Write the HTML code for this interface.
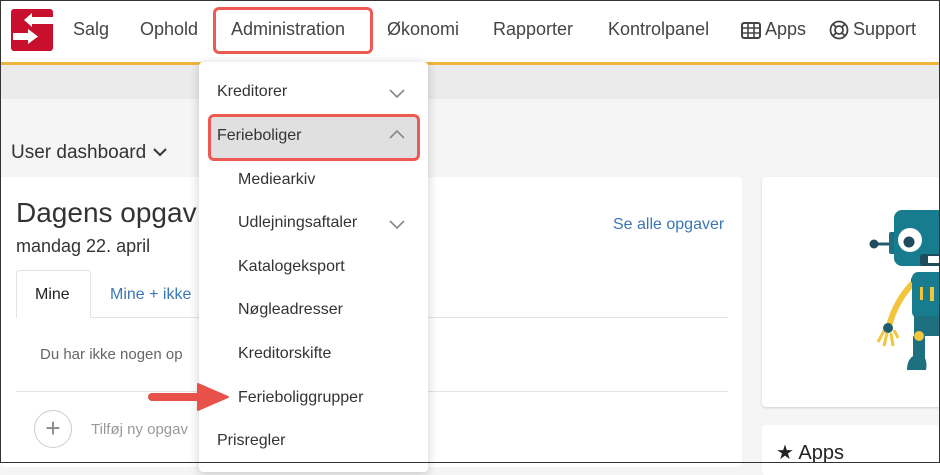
<!DOCTYPE html>
<html><head><meta charset="utf-8"><style>
*{margin:0;padding:0;box-sizing:border-box}
body{width:940px;height:463px;overflow:hidden;position:relative;background:#f5f5f5;font-family:"Liberation Sans",Arial,sans-serif;color:#333}
.a{position:absolute;white-space:nowrap}
.nav{font-size:18px;color:#444;top:19px}
.dd{font-size:16px;color:#333}
</style></head><body>
<div class="a" style="left:0;top:0;width:940px;height:62px;background:#fff"></div>
<div class="a" style="left:0;top:62px;width:940px;height:3px;background:#f0b43c"></div>
<div class="a" style="left:0;top:65px;width:940px;height:34px;background:#ebebeb"></div>
<!-- logo -->
<svg class="a" style="left:11px;top:9px" width="42" height="42" viewBox="0 0 42 42"><rect width="42" height="42" rx="3" fill="#c8102e"/><path d="M13 11 L21 4 V8 H42 V15 H21 V18 Z" fill="#fff"/><path d="M2 24 H17 V20 L27 27.5 L17 35 V31 H2 Z" fill="#fff"/></svg>
<div class="a nav" style="left:73px">Salg</div>
<div class="a nav" style="left:140px">Ophold</div>
<div class="a" style="left:213px;top:7px;width:160px;height:47px;border:3px solid #ee5a52;border-radius:6px"></div>
<div class="a nav" style="left:231px">Administration</div>
<div class="a nav" style="left:387px">Økonomi</div>
<div class="a nav" style="left:493px">Rapporter</div>
<div class="a nav" style="left:608px">Kontrolpanel</div>
<svg class="a" style="left:741px;top:22px" width="20" height="17" viewBox="0 0 20 17"><rect x="1" y="1" width="18" height="15" rx="2" fill="none" stroke="#444" stroke-width="2"/><path d="M1 6H19M1 11H19M7 1V16M13 1V16" stroke="#444" stroke-width="1.6"/></svg>
<div class="a nav" style="left:765px">Apps</div>
<svg class="a" style="left:829px;top:20px" width="20" height="20" viewBox="0 0 20 20" fill="none" stroke="#444" stroke-width="1.8"><circle cx="10" cy="10" r="8.5"/><circle cx="10" cy="10" r="4"/><path d="M4 4L7 7M16 4L13 7M4 16L7 13M16 16L13 13"/></svg>
<div class="a nav" style="left:853px">Support</div>
<div class="a" style="left:11px;top:142px;font-size:19px;color:#333">User dashboard</div>
<svg class="a" style="left:152px;top:146px" width="16" height="12"><path d="M2 3L8 9L14 3" fill="none" stroke="#333" stroke-width="2"/></svg>
<!-- left card -->
<div class="a" style="left:0;top:177px;width:742px;height:290px;background:#fff;border-radius:4px"></div>
<div class="a" style="left:16px;top:197px;font-size:28px;color:#333">Dagens opgav</div>
<div class="a" style="left:16px;top:236px;font-size:18px;color:#333">mandag 22. april</div>
<div class="a" style="left:613px;top:216px;font-size:16px;color:#3a78b5">Se alle opgaver</div>
<div class="a" style="left:16px;top:317px;width:712px;height:1px;background:#e3e3e3"></div>
<div class="a" style="left:16px;top:270px;width:75px;height:48px;border:1px solid #e3e3e3;border-bottom:none;background:#fff;border-radius:3px 3px 0 0"></div>
<div class="a" style="left:35px;top:286px;font-size:16px;color:#222">Mine</div>
<div class="a" style="left:110px;top:286px;font-size:16px;color:#3a78b5">Mine + ikke</div>
<div class="a" style="left:40px;top:346px;font-size:15px;color:#666">Du har ikke nogen op</div>
<div class="a" style="left:16px;top:391px;width:712px;height:1px;background:#e3e3e3"></div>
<div class="a" style="left:34px;top:410px;width:38px;height:38px;border:1px solid #ccc;border-radius:50%;text-align:center;line-height:34px;font-size:26px;color:#888;font-weight:300">+</div>
<div class="a" style="left:91px;top:421px;font-size:15px;color:#999">Tilføj ny opgav</div>
<!-- right cards -->
<div class="a" style="left:762px;top:177px;width:190px;height:230px;background:#fff;border-radius:4px;box-shadow:0 1px 2px rgba(0,0,0,.15)"></div>
<svg class="a" style="left:860px;top:200px" width="80" height="180" viewBox="860 200 80 180">
<path d="M874 244 H893" stroke="#1f5e6e" stroke-width="3"/><circle cx="874" cy="244" r="4.5" fill="#1f4b5c"/>
<rect x="889" y="232" width="8" height="22" rx="2" fill="#1e6f80"/>
<rect x="894" y="210" width="60" height="56" rx="8" fill="#177d8e"/>
<circle cx="910" cy="240" r="12" fill="#fff"/><circle cx="909" cy="242" r="5.5" fill="#1f4b5c"/>
<rect x="920" y="254" width="22" height="12" rx="3" fill="#1f4b5c"/><rect x="928" y="256" width="12" height="7" fill="#fff"/>
<path d="M914 282 Q896 300 889 326" stroke="#f2c53d" stroke-width="6" fill="none"/>
<circle cx="916" cy="280" r="5" fill="#1f4b5c"/>
<circle cx="888" cy="328" r="5" fill="#1f5e6e"/>
<path d="M884 331 L878 342 M887 333 L884 346 M891 333 L893 346 M894 330 L898 338" stroke="#f2c53d" stroke-width="3"/>
<rect x="912" y="272" width="40" height="46" rx="6" fill="#177d8e"/>
<rect x="920" y="287" width="3" height="13" fill="#f2c53d"/><rect x="930" y="287" width="4" height="14" fill="#f2c53d"/>
<rect x="914" y="316" width="26" height="20" fill="#1e6f80"/>
<rect x="913" y="336" width="12" height="22" fill="#1e6f80"/>
<circle cx="919" cy="336" r="5" fill="#f2c53d"/>
<path d="M907 370 Q907 354 922 354 Q928 360 926 370 Z" fill="#1e6f80"/>
</svg>
<div class="a" style="left:762px;top:425px;width:190px;height:50px;background:#fff;border-radius:4px"></div>
<div class="a" style="left:776px;top:440px;font-size:20px;color:#222">&#9733; Apps</div>
<!-- dropdown -->
<div class="a" style="left:199px;top:62px;width:229px;height:410px;background:#fff;border-radius:4px;box-shadow:0 2px 10px rgba(0,0,0,.2)"></div>
<div class="a dd" style="left:217px;top:83px">Kreditorer</div>
<svg class="a" style="left:388px;top:87px" width="18" height="12"><path d="M2 3L9 10L16 3" fill="none" stroke="#888" stroke-width="1.6"/></svg>
<div class="a" style="left:208px;top:114px;width:212px;height:47px;background:#e0e0e0;border:3px solid #ee5a52;border-radius:6px"></div>
<div class="a dd" style="left:217px;top:127px">Ferieboliger</div>
<svg class="a" style="left:388px;top:128px" width="18" height="12"><path d="M2 10L9 3L16 10" fill="none" stroke="#888" stroke-width="1.6"/></svg>
<div class="a dd" style="left:238px;top:171px">Mediearkiv</div>
<div class="a dd" style="left:238px;top:214px">Udlejningsaftaler</div>
<svg class="a" style="left:388px;top:218px" width="18" height="12"><path d="M2 3L9 10L16 3" fill="none" stroke="#888" stroke-width="1.6"/></svg>
<div class="a dd" style="left:238px;top:258px">Katalogeksport</div>
<div class="a dd" style="left:238px;top:301px">Nøgleadresser</div>
<div class="a dd" style="left:238px;top:345px">Kreditorskifte</div>
<div class="a dd" style="left:238px;top:389px">Ferieboliggrupper</div>
<div class="a dd" style="left:217px;top:432px">Prisregler</div>
<svg class="a" style="left:148px;top:380px" width="82" height="34"><path d="M4 17 H52" stroke="#e8504a" stroke-width="8" stroke-linecap="round"/><path d="M50 4 L80 17 L50 30 Z" fill="#e8504a" stroke="#e8504a" stroke-width="2" stroke-linejoin="round"/></svg>
<div class="a" style="left:0;top:0;width:940px;height:463px;border:1px solid #333"></div>
</body></html>
